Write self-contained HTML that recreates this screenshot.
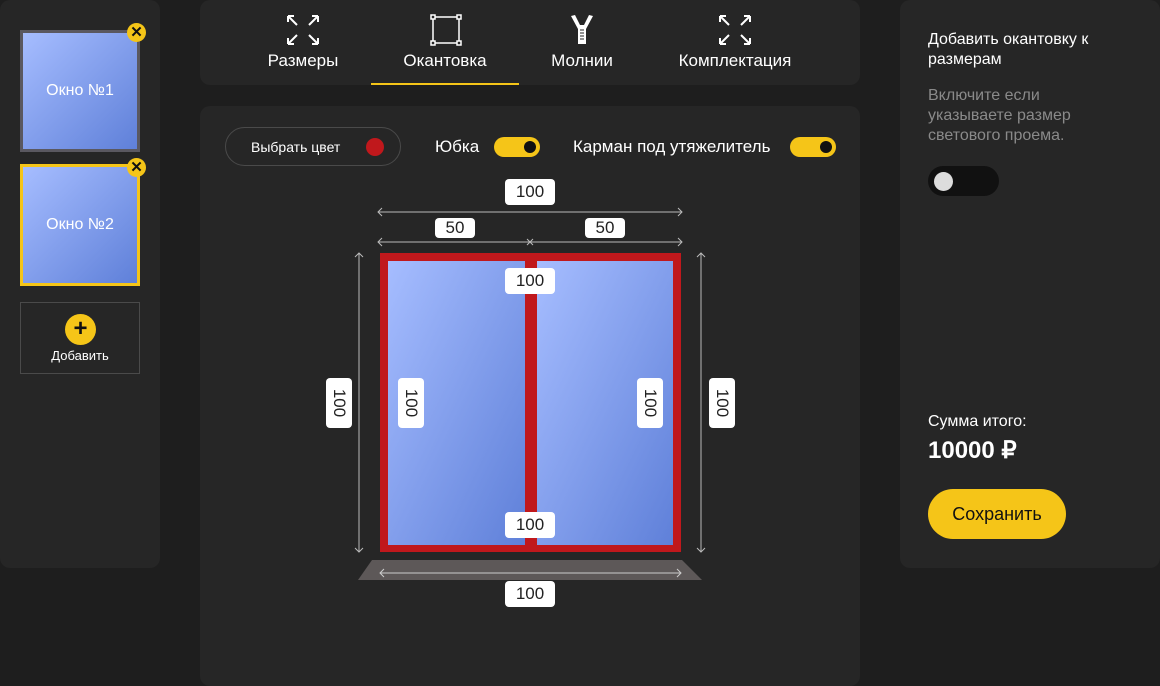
<!DOCTYPE html>
<html><head><meta charset="utf-8"><style>
*{margin:0;padding:0;box-sizing:border-box}
body{width:1160px;height:668px;background:#1e1e1e;font-family:"Liberation Sans",sans-serif;position:relative;overflow:hidden;color:#fff}
.a{position:absolute}
.p{background:#262626;border-radius:10px}
.win{position:absolute;left:20px;width:120px;height:122px;background:linear-gradient(135deg,#a6bdff,#5f80d9);display:flex;align-items:center;justify-content:center;font-size:16px;color:#fff}
.x{position:absolute;width:19px;height:19px;border-radius:50%;background:#f5c518;color:#111;font-size:15px;font-weight:bold;display:flex;align-items:center;justify-content:center;line-height:1}
.tab{position:absolute;top:51px;font-size:17px;color:#fff;transform:translateX(-50%);white-space:nowrap}
.lb{position:absolute;background:#fff;border-radius:4px;color:#222;font-size:17px;display:flex;align-items:center;justify-content:center}
.v{width:26px;height:50px}.v span{transform:rotate(90deg);display:block}
.h{width:50px;height:26px}
.tg{position:absolute;width:46px;height:20px;border-radius:10px;background:#f5c518}
.tg:after{content:"";position:absolute;right:4px;top:4px;width:12px;height:12px;border-radius:50%;background:#111}
</style></head><body>
<div class="a p" style="left:0;top:0;width:160px;height:568px"></div>
<div class="win" style="top:30px;border:3px solid #5a5860">Окно №1</div>
<div class="x" style="left:127px;top:23px">✕</div>
<div class="win" style="top:164px;border:3px solid #f5c518">Окно №2</div>
<div class="x" style="left:127px;top:158px">✕</div>
<div class="a" style="left:20px;top:302px;width:120px;height:72px;border:1px solid #4a4a4a"></div>
<div class="a" style="left:65px;top:314px;width:31px;height:31px;border-radius:50%;background:#f5c518;color:#111;font-size:24px;font-weight:bold;text-align:center;line-height:30px">+</div>
<div class="a" style="left:20px;top:348px;width:120px;text-align:center;font-size:13px">Добавить</div>

<div class="a p" style="left:200px;top:0;width:660px;height:85px"></div>
<svg class="a" style="left:286px;top:14px" width="34" height="32" fill="none" stroke="#fff" stroke-width="2"><path d="M2 2l9 9M2 2h6M2 2v6M32 2l-9 9M32 2h-6M32 2v6M2 30l9-9M2 30h6M2 30v-6M32 30l-9-9M32 30h-6M32 30v-6"/></svg>
<svg class="a" style="left:718px;top:14px" width="34" height="32" fill="none" stroke="#fff" stroke-width="2"><path d="M2 2l9 9M2 2h6M2 2v6M32 2l-9 9M32 2h-6M32 2v6M2 30l9-9M2 30h6M2 30v-6M32 30l-9-9M32 30h-6M32 30v-6"/></svg>
<svg class="a" style="left:430px;top:14px" width="32" height="32" fill="none" stroke="#fff" stroke-width="1.5"><rect x="3" y="3" width="26" height="26"/><g fill="#262626"><rect x="1" y="1" width="4" height="4"/><rect x="27" y="1" width="4" height="4"/><rect x="1" y="27" width="4" height="4"/><rect x="27" y="27" width="4" height="4"/></g></svg>
<svg class="a" style="left:570px;top:14px" width="24" height="32"><path d="M1 2l4-1 5 10h4l5-10 4 1-7 13v15h-8V15z" fill="#fff"/><path d="M10 16h4M10 19h4M10 22h4M10 25h4" stroke="#262626"/></svg>
<div class="tab" style="left:303px">Размеры</div>
<div class="tab" style="left:445px">Окантовка</div>
<div class="tab" style="left:582px">Молнии</div>
<div class="tab" style="left:735px">Комплектация</div>
<div class="a" style="left:371px;top:83px;width:148px;height:2px;background:#f5c518"></div>

<div class="a p" style="left:200px;top:106px;width:660px;height:580px"></div>
<div class="a" style="left:225px;top:127px;width:176px;height:39px;border:1px solid #4a4a4a;border-radius:20px"></div>
<div class="a" style="left:251px;top:139px;font-size:14px">Выбрать цвет</div>
<div class="a" style="left:366px;top:138px;width:18px;height:18px;border-radius:50%;background:#c0181c"></div>
<div class="a" style="left:435px;top:137px;font-size:17px">Юбка</div>
<div class="tg" style="left:494px;top:137px"></div>
<div class="a" style="left:573px;top:137px;font-size:17px">Карман под утяжелитель</div>
<div class="tg" style="left:790px;top:137px"></div>

<svg class="a" style="left:0;top:0" width="1160" height="668" fill="none" stroke="#bbb" stroke-width="1">
<path d="M378 212h304M382 208l-4 4 4 4M678 208l4 4-4 4"/>
<path d="M378 242h304M382 238l-4 4 4 4M678 238l4 4-4 4M527 239l6 6M533 239l-6 6"/>
<path d="M359 253v299M355 257l4-4 4 4M355 548l4 4 4-4"/>
<path d="M701 253v299M697 257l4-4 4 4M697 548l4 4 4-4"/>
<polygon points="372,560 682,560 702,580 358,580" fill="#5d5858" stroke="none"/>
<path d="M380 573h301M384 569l-4 4 4 4M677 569l4 4-4 4" stroke="#ccc"/>
<rect x="380" y="253" width="301" height="299" fill="#c0181c" stroke="none"/>
<defs><linearGradient id="g" x1="0" y1="0" x2="1" y2="1"><stop offset="0" stop-color="#a6bdff"/><stop offset="1" stop-color="#5f80d9"/></linearGradient></defs>
<rect x="388" y="261" width="137" height="284" fill="url(#g)" stroke="none"/>
<rect x="537" y="261" width="136" height="284" fill="url(#g)" stroke="none"/>
</svg>
<div class="lb h" style="left:505px;top:179px">100</div>
<div class="lb" style="left:435px;top:218px;width:40px;height:20px">50</div>
<div class="lb" style="left:585px;top:218px;width:40px;height:20px">50</div>
<div class="lb h" style="left:505px;top:268px">100</div>
<div class="lb h" style="left:505px;top:512px">100</div>
<div class="lb h" style="left:505px;top:581px">100</div>
<div class="lb v" style="left:326px;top:378px"><span>100</span></div>
<div class="lb v" style="left:398px;top:378px"><span>100</span></div>
<div class="lb v" style="left:637px;top:378px"><span>100</span></div>
<div class="lb v" style="left:709px;top:378px"><span>100</span></div>

<div class="a p" style="left:900px;top:0;width:260px;height:568px"></div>
<div class="a" style="left:928px;top:30px;font-size:16px;line-height:20px;width:200px">Добавить окантовку к размерам</div>
<div class="a" style="left:928px;top:86px;font-size:16px;line-height:20px;width:160px;color:#8a8a8a">Включите если указываете размер светового проема.</div>
<div class="a" style="left:928px;top:166px;width:71px;height:30px;border-radius:15px;background:#111"></div>
<div class="a" style="left:934px;top:172px;width:19px;height:19px;border-radius:50%;background:#ddd"></div>
<div class="a" style="left:928px;top:413px;font-size:16px">Сумма итого:</div>
<div class="a" style="left:928px;top:436px;font-size:24px;font-weight:bold">10000 ₽</div>
<div class="a" style="left:928px;top:489px;width:138px;height:50px;border-radius:25px;background:#f5c518;color:#111;font-size:18px;text-align:center;line-height:50px">Сохранить</div>
</body></html>
